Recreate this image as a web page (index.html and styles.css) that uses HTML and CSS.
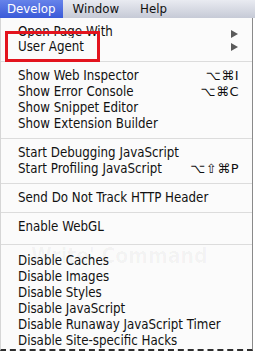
FILE: index.html
```html
<!DOCTYPE html>
<html lang="en">
<head>
<meta charset="UTF-8" />
<title>Develop menu</title>
<link rel="stylesheet" href="styles.css">
</head>
<body>
<div class="screen">
  <!-- menu bar -->
  <div class="menubar">
    <span class="menu-title active">Develop</span>
    <span class="menu-title">Window</span>
    <span class="menu-title help">Help</span>
  </div>

  <!-- develop menu -->
  <div class="menu">
    <div class="ghost">Write' Command</div>

    <div class="item clipped"><span class="label">Open Page With</span><span class="arrow"></span></div>
    <div class="item tall"><span class="label">User Agent</span><span class="arrow"></span></div>
    <div class="sep"></div>
    <div class="item"><span class="label">Show Web Inspector</span><span class="key">⌥⌘I</span></div>
    <div class="item"><span class="label">Show Error Console</span><span class="key">⌥⌘C</span></div>
    <div class="item"><span class="label">Show Snippet Editor</span></div>
    <div class="item"><span class="label">Show Extension Builder</span></div>
    <div class="sep"></div>
    <div class="item"><span class="label">Start Debugging JavaScript</span></div>
    <div class="item"><span class="label">Start Profiling JavaScript</span><span class="key">⌥⇧⌘P</span></div>
    <div class="sep"></div>
    <div class="item"><span class="label">Send Do Not Track HTTP Header</span></div>
    <div class="sep"></div>
    <div class="item"><span class="label">Enable WebGL</span></div>
    <div class="sep wide"></div>
    <div class="item"><span class="label">Disable Caches</span></div>
    <div class="item"><span class="label">Disable Images</span></div>
    <div class="item"><span class="label">Disable Styles</span></div>
    <div class="item"><span class="label">Disable JavaScript</span></div>
    <div class="item"><span class="label">Disable Runaway JavaScript Timer</span></div>
    <div class="item"><span class="label">Disable Site-specific Hacks</span></div>
  </div>

  <!-- highlight box -->
  <div class="callout"></div>
</div>
</body>
</html>
```

FILE: styles.css
```css
body {
    margin: 0;
    background-color: #ffffff;
    font-family: 'DejaVu Sans', Verdana, sans-serif;
}
.screen {
    position: relative;
    width: 255px;
    height: 353px;
    overflow: hidden;
}
.menubar {
    display: flex;
    height: 18px;
    background: linear-gradient(#e9ebf1, #c6cad6);
    font-size: 11.8px;
    line-height: 18px;
    color: #111;
}
.menu-title {
    padding: 0 10px;
}
.menu-title.active {
    padding: 0 7px;
    color: #ffffff;
    background: linear-gradient(#6683ea, #3a5ad8);
}
.menu-title.help {
    padding-left: 11px;
}
.menu {
    position: relative;
    z-index: 0;
    width: 251px;
    padding-top: 7px;
    background-color: #fbfbfb;
    border-left: 1px solid #d6d6d6;
    border-right: 1px solid #8a8a8a;
    border-bottom: 2px dashed #2e2e2e;
    font-family: 'DejaVu Sans Condensed', 'DejaVu Sans', sans-serif;
    font-size: 13.2px;
    color: #111;
}
.ghost {
    position: absolute;
    z-index: -1;
    top: 228px;
    left: 30px;
    font-size: 21px;
    line-height: 20px;
    font-weight: bold;
    white-space: nowrap;
    color: rgba(0, 0, 0, 0.035);
}
.item {
    display: flex;
    align-items: center;
    justify-content: space-between;
    height: 16px;
    line-height: 16px;
    padding: 0 13px 0 17px;
    white-space: nowrap;
}
.item.tall {
    height: 17px;
}
.item.clipped {
    height: 13px;
    overflow: hidden;
    align-items: flex-end;
}
.item.clipped .label {
    margin-bottom: -2px;
}
.key {
    font-family: 'DejaVu Sans', sans-serif;
    font-size: 13px;
    letter-spacing: 0.5px;
}
.arrow {
    width: 0;
    height: 0;
    margin-right: 1px;
    border-top: 4.5px solid transparent;
    border-bottom: 4.5px solid transparent;
    border-left: 7px solid #5a5a5a;
}
.sep {
    height: 1px;
    margin: 6px 0;
    background-color: #dcdcdc;
}
.sep.wide {
    margin: 9px 0 8px;
}
.callout {
    position: absolute;
    top: 31px;
    left: 5px;
    width: 95px;
    height: 31px;
    box-sizing: border-box;
    border: 3px solid #e3141e;
}
```
